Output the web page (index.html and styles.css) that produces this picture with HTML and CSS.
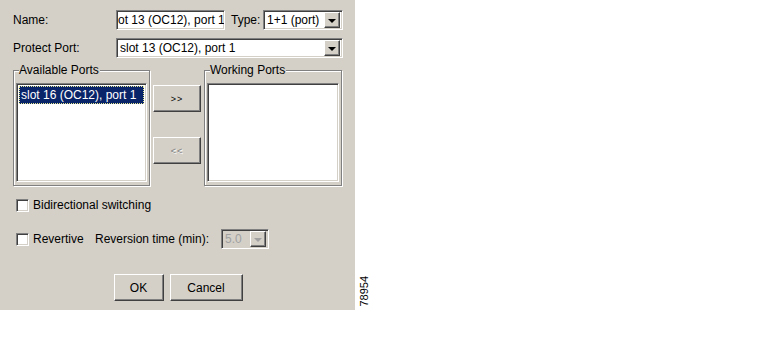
FILE: index.html
```html
<!DOCTYPE html>
<html lang="en">

<head>
    <meta charset="UTF-8">
    <title>Protection Group</title>
    <link rel="stylesheet" href="styles.css">
</head>

<body>
    <div class="page">
        <div class="dialog">
            <div class="row">
                <span class="label">Name:</span>
                <div class="sunken text-field">ot 13 (OC12), port 1</div>
                <span class="type-label">Type:</span>
                <div class="sunken combo type-combo">
                    <span class="combo-value">1+1 (port)</span>
                    <span class="raised arrow"><span class="tri"></span></span>
                </div>
            </div>

            <div class="row row-protect">
                <span class="label">Protect Port:</span>
                <div class="sunken combo protect-combo">
                    <span class="combo-value">slot 13 (OC12), port 1</span>
                    <span class="raised arrow"><span class="tri"></span></span>
                </div>
            </div>

            <div class="ports">
                <fieldset class="group group-available">
                    <legend>Available Ports</legend>
                    <div class="sunken list">
                        <div class="list-item selected">slot 16 (OC12), port 1</div>
                    </div>
                </fieldset>

                <div class="move-buttons">
                    <button class="raised btn btn-move">&gt;&gt;</button>
                    <button class="raised btn btn-move" disabled>&lt;&lt;</button>
                </div>

                <fieldset class="group group-working">
                    <legend>Working Ports</legend>
                    <div class="sunken list"></div>
                </fieldset>
            </div>

            <div class="row row-bidir">
                <span class="sunken check"></span>
                <span>Bidirectional switching</span>
            </div>

            <div class="row row-revert">
                <span class="sunken check"></span>
                <span class="revert-label">Revertive</span>
                <span class="time-label">Reversion time (min):</span>
                <div class="sunken combo time-combo disabled">
                    <span class="combo-value">5.0</span>
                    <span class="raised arrow"><span class="tri"></span></span>
                </div>
            </div>

            <div class="actions">
                <button class="raised btn btn-ok">OK</button>
                <button class="raised btn btn-cancel">Cancel</button>
            </div>
        </div>
        <div class="figure-id">78954</div>
    </div>
</body>

</html>
```

FILE: styles.css
```css
body {
    margin: 0;
    background: #fff;
    font-family: "Liberation Sans", Arial, sans-serif;
    font-size: 12px;
    color: #000;
}

.page {
    display: flex;
    align-items: flex-end;
}

.dialog {
    width: 355px;
    height: 310px;
    box-sizing: border-box;
    background: #d4d0c8;
    padding: 10px 12px 0 13px;
}

.row {
    display: flex;
    align-items: center;
}

.label {
    width: 103px;
}

/* sunken / raised borders, windows classic style */
.sunken {
    background: #fff;
    box-sizing: border-box;
    border: 1px solid;
    border-color: #808080 #fff #fff #808080;
    box-shadow: inset 1px 1px 0 #404040, inset -1px -1px 0 #d4d0c8;
}

.raised {
    background: #d4d0c8;
    box-sizing: border-box;
    border: 1px solid;
    border-color: #fff #404040 #404040 #fff;
    box-shadow: inset -1px -1px 0 #808080;
}

.text-field {
    width: 109px;
    height: 20px;
    line-height: 18px;
    padding-left: 1px;
    white-space: nowrap;
    overflow: hidden;
}

.type-label {
    margin-left: 6px;
    width: 32px;
}

.combo {
    display: flex;
    align-items: center;
    height: 20px;
    padding: 2px;
}

.combo-value {
    flex: 1;
    padding-left: 1px;
    white-space: nowrap;
    overflow: hidden;
}

.arrow {
    width: 16px;
    height: 16px;
    display: flex;
    align-items: center;
    justify-content: center;
}

.tri {
    width: 0;
    height: 0;
    border-left: 4px solid transparent;
    border-right: 4px solid transparent;
    border-top: 4px solid #000;
    margin-top: 1px;
}

.type-combo {
    width: 80px;
}

.row-protect {
    margin-top: 8px;
}

.protect-combo {
    width: 227px;
}

.ports {
    display: flex;
    gap: 3px;
    margin-top: 5px;
}

.group {
    margin: 0;
    padding: 0 2px 2px 2px;
    border: 1px solid #808080;
    box-shadow: inset 1px 1px 0 #fff, 1px 1px 0 #fff;
    height: 123px;
    box-sizing: border-box;
}

.group legend {
    padding: 0 1px 0 0;
    margin-left: 3px;
    line-height: 14px;
    background: #d4d0c8;
}

.group-available {
    width: 137px;
}

.group-working {
    width: 138px;
}

.list {
    margin-top: 6px;
    height: 99px;
    padding: 2px;
}

.list-item {
    height: 18px;
    line-height: 16px;
    padding-left: 1px;
    box-sizing: border-box;
    white-space: nowrap;
}

.selected {
    background: #0a246a;
    color: #fff;
    border: 1px dotted #e8e890;
}

.move-buttons {
    display: flex;
    flex-direction: column;
    gap: 25px;
    padding-top: 22px;
}

.btn {
    font-family: "Liberation Sans", Arial, sans-serif;
    font-size: 12px;
    color: #000;
    padding: 0;
}

.btn-move {
    width: 48px;
    height: 27px;
    font-size: 9px;
    letter-spacing: 1px;
}

.btn:disabled {
    color: #808080;
    text-shadow: 1px 1px 0 #fff;
    border-color: #fff #404040 #404040 #fff;
    box-shadow: inset -1px -1px 0 #808080;
}

.check {
    width: 13px;
    height: 13px;
    margin: 0 4px 0 3px;
}

.row-bidir {
    margin-top: 12px;
}

.row-revert {
    margin-top: 17px;
    height: 20px;
}

.revert-label {
    width: 62px;
}

.time-label {
    width: 126px;
}

.time-combo {
    width: 48px;
}

.disabled {
    background: #d4d0c8;
    color: #a0a0a0;
}

.disabled .tri {
    border-top-color: #a0a0a0;
}

.actions {
    display: flex;
    justify-content: center;
    gap: 6px;
    margin-top: 25px;
}

.btn-ok {
    width: 50px;
    height: 27px;
}

.btn-cancel {
    width: 73px;
    height: 27px;
}

.figure-id {
    writing-mode: vertical-rl;
    transform: rotate(180deg);
    font-size: 11px;
    line-height: 11px;
    margin-left: 4px;
    margin-bottom: 3px;
}
```
